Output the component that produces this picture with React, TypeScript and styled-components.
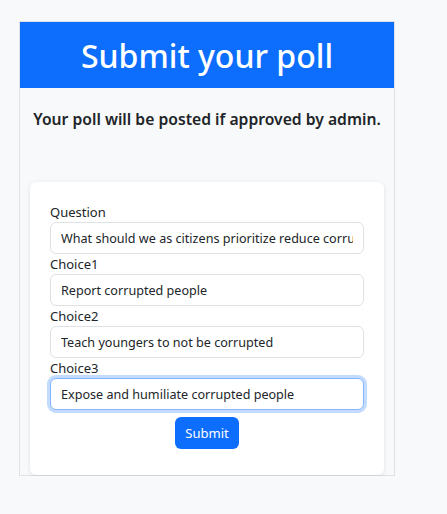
import styled, { createGlobalStyle } from "styled-components";

const GlobalStyle = createGlobalStyle`
  body {
    margin: 0;
    background: #f8f9fa;
    font-family: "Noto Sans", "Open Sans", sans-serif;
    color: #212529;
  }
`;

const Page = styled.div`
  padding: 21px 0 0 19px;
`;

const Panel = styled.div`
  width: 374px;
  border: 1px solid #dee2e6;
  background: #f8f9fa;
`;

const Header = styled.div`
  height: 66px;
  background: #0d6efd;
  color: #fff;
  display: flex;
  align-items: center;
  justify-content: center;
`;

const Title = styled.h1`
  margin: 0;
  font-size: 32px;
  font-weight: 500;
`;

const Notice = styled.h5`
  margin: 20px 0 52px;
  text-align: center;
  font-size: 15.7px;
  font-weight: 600;
  line-height: 22px;
`;

const Card = styled.form`
  margin: 0 10px;
  padding: 20px 20px 26px;
  background: #fff;
  border-radius: 6px;
  box-shadow: 0 1px 4px rgba(0, 0, 0, 0.1);
  display: flex;
  flex-direction: column;
`;

const Field = styled.div`
  display: flex;
  flex-direction: column;
`;

const Label = styled.label`
  display: block;
  font-size: 13px;
  line-height: 20px;
`;

const Input = styled.input<{ $focused?: boolean }>`
  display: block;
  box-sizing: border-box;
  width: 100%;
  height: 32px;
  padding: 4px 10px;
  font: inherit;
  font-size: 12.6px;
  color: #212529;
  background: #fff;
  border: 1px solid ${({ $focused }) => ($focused ? "#86b7fe" : "#dee2e6")};
  border-radius: 6px;
  outline: none;
  box-shadow: ${({ $focused }) =>
    $focused ? "0 0 0 3px rgba(13, 110, 253, 0.25)" : "none"};
`;

const Button = styled.button`
  align-self: center;
  margin-top: 7px;
  height: 32px;
  padding: 0 10px;
  font: inherit;
  font-size: 13px;
  color: #fff;
  background: #0d6efd;
  border: none;
  border-radius: 6px;
`;

const fields = [
  { label: "Question", value: "What should we as citizens prioritize reduce corruption?" },
  { label: "Choice1", value: "Report corrupted people" },
  { label: "Choice2", value: "Teach youngers to not be corrupted" },
  { label: "Choice3", value: "Expose and humiliate corrupted people", focused: true },
];

const App = () => {
  return (
    <Page>
      <GlobalStyle />
      <Panel>
        <Header>
          <Title>Submit your poll</Title>
        </Header>
        <Notice>Your poll will be posted if approved by admin.</Notice>
        <Card onSubmit={(e) => e.preventDefault()}>
          {fields.map((f) => (
            <Field key={f.label}>
              <Label>{f.label}</Label>
              <Input defaultValue={f.value} $focused={f.focused} />
            </Field>
          ))}
          <Button type="submit">Submit</Button>
        </Card>
      </Panel>
    </Page>
  );
};

export default App;
